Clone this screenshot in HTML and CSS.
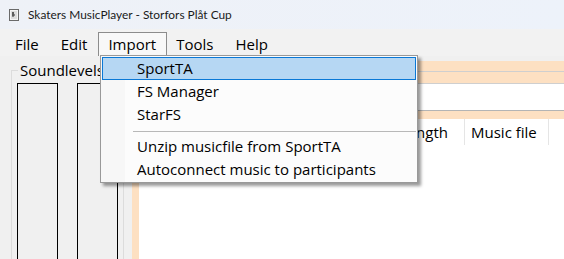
FILE: index.html
```html
<!DOCTYPE html>
<html>
<head>
<meta charset="utf-8">
<link rel="stylesheet" href="styles.css">
</head>
<body>
<div class="window">
  <div class="titlebar">
    <svg class="appicon" width="12" height="12" viewBox="0 0 12 12">
      <rect x="1.5" y="0.5" width="9" height="11" fill="#f4f4f4" stroke="#6a6a6a"/>
      <rect x="3" y="2" width="6" height="8" fill="#dcdcdc"/>
      <path d="M4 4h2M4 6h3M5 3v5" stroke="#333" stroke-width="1"/>
    </svg>
    <span class="title">Skaters MusicPlayer - Storfors Plåt Cup</span>
  </div>
  <div class="menubar">
    <span class="mitem">File</span>
    <span class="mitem">Edit</span>
    <span class="mitem open">Import</span>
    <span class="mitem">Tools</span>
    <span class="mitem">Help</span>
  </div>
  <div class="client">
    <div class="left">
      <div class="group">
        <span class="glabel">Soundlevels</span>
        <div class="meters">
          <div class="meter"></div>
          <div class="meter"></div>
        </div>
      </div>
    </div>
    <div class="main">
      <div class="band b1"></div>
      <div class="band b2"></div>
      <div class="inner">
        <div class="textrow"></div>
        <div class="band b3"></div>
        <div class="listwrap">
          <div class="list">
            <div class="header">
              <span class="col c1">Length</span>
              <span class="col c2">Music file</span>
            </div>
          </div>
        </div>
      </div>
    </div>
  </div>

  <div class="dropdown">
    <div class="ditem hl">SportTA</div>
    <div class="ditem">FS Manager</div>
    <div class="ditem">StarFS</div>
    <div class="sep"></div>
    <div class="ditem">Unzip musicfile from SportTA</div>
    <div class="ditem">Autoconnect music to participants</div>
  </div>
</div>
</body>
</html>
```
FILE: styles.css
```css
html, body {
  margin: 0;
  padding: 0;
}
body {
  width: 564px;
  height: 259px;
  overflow: hidden;
  font-family: "Open Sans", "Liberation Sans", sans-serif;
  color: #000;
}
.window {
  position: relative;
  width: 564px;
  height: 259px;
  display: flex;
  flex-direction: column;
}
.titlebar {
  height: 29px;
  flex: none;
  display: flex;
  align-items: center;
  background: linear-gradient(90deg, #eef1f7, #edf2fa);
  padding-left: 8px;
  box-sizing: border-box;
}
.appicon {
  margin-right: 8px;
  margin-top: 1px;
}
.title {
  font-family: "Lato", "Liberation Sans", sans-serif;
  font-size: 11.9px;
  color: #1a1a1a;
}
.menubar {
  height: 27px;
  flex: none;
  display: flex;
  align-items: flex-end;
  background: #f2f2f2;
  padding-left: 7px;
  box-sizing: border-box;
  font-size: 15px;
}
.mitem {
  height: 24px;
  line-height: 22px;
  padding: 0 7px 0 7px;
  margin-right: 6px;
  box-sizing: border-box;
  border: 1px solid transparent;
  border-bottom: none;
}
.mitem.open {
  border-color: #8c8c8c;
  background: #f8f8f8;
  padding: 0 10px 0 9px;
  margin-left: -3px;
  margin-right: 1px;
}
.client {
  flex: 1;
  display: flex;
  background: #f0f0f0;
  min-height: 0;
}
.left {
  width: 132px;
  flex: none;
  padding: 14px 8px 0 11px;
  box-sizing: border-box;
}
.group {
  position: relative;
  height: 100%;
  border: 1px solid #dcdcdc;
  border-bottom: none;
  padding: 12px 0 0 5px;
  box-sizing: border-box;
}
.glabel {
  position: absolute;
  top: -10px;
  left: 6px;
  background: #f0f0f0;
  padding: 0 2px;
  font-size: 15px;
  line-height: 18px;
  white-space: nowrap;
}
.meters {
  display: flex;
  gap: 19px;
  height: 100%;
}
.meter {
  width: 39px;
  border: 1px solid #000;
  border-bottom: none;
}
.main {
  flex: 1;
  margin-top: 5px;
  background: #fde0c2;
  display: flex;
  flex-direction: column;
}
.band {
  flex: none;
}
.b1 {
  height: 10px;
  border-bottom: 1px solid #cfcfcf;
}
.b2 {
  height: 11px;
  border-bottom: 1px solid #cfcfcf;
}
.inner {
  flex: 1;
  display: flex;
  flex-direction: column;
}
.textrow {
  height: 26px;
  background: #fff;
  border-bottom: 1px solid #b4b4b4;
  flex: none;
}
.b3 {
  height: 8px;
}
.listwrap {
  flex: 1;
  padding-left: 7px;
  display: flex;
}
.list {
  flex: 1;
  background: #fff;
}
.header {
  height: 26px;
  display: flex;
  font-size: 15px;
  line-height: 26px;
}
.col {
  box-sizing: border-box;
  border-right: 1px solid #e5e5e5;
  padding-left: 6px;
  white-space: nowrap;
  height: 26px;
}
.c1 {
  width: 326px;
  text-align: right;
  padding-right: 16px;
}
.c2 {
  width: 84px;
}
.dropdown {
  position: absolute;
  left: 100px;
  top: 55px;
  width: 318px;
  box-sizing: border-box;
  border: 1px solid #999;
  background: linear-gradient(90deg, #f7f7f7 0, #f7f7f7 24px, #fcfcfc 24px);
  box-shadow: 3px 3px 3px rgba(0, 0, 0, 0.4);
  padding: 1px 1px 1px 1px;
  font-size: 15px;
}
.ditem {
  height: 23px;
  line-height: 21px;
  padding-left: 34px;
  box-sizing: border-box;
  border: 1px solid transparent;
  white-space: nowrap;
}
.ditem.hl {
  background: #b6d7f3;
  border-color: #0a78d6;
}
.sep {
  height: 1px;
  background: #b8b8b8;
  margin: 5px 0 3px 31px;
}
```
